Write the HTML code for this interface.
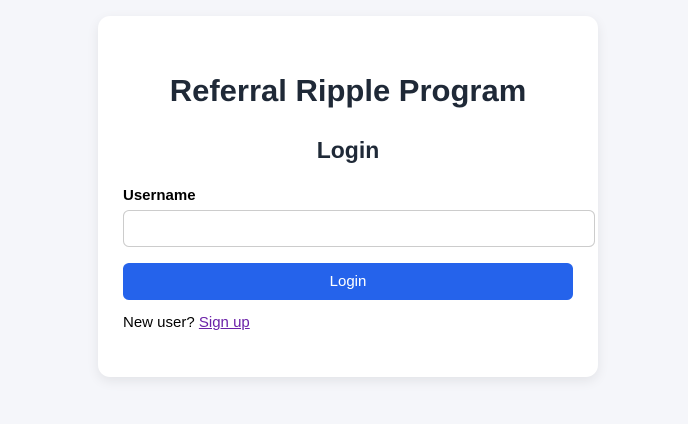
<!DOCTYPE html>
<html><head><style>
body{margin:0;background:#f5f6fa;font-family:"Liberation Sans",sans-serif;width:688px;height:424px;overflow:hidden;}
.card{position:absolute;left:98px;top:16px;width:500px;height:361px;background:#fff;border-radius:12px;box-shadow:0 4px 12px rgba(0,0,0,0.08);}
h1{position:absolute;top:56px;left:0;width:500px;margin:0;text-align:center;font-size:31px;font-weight:bold;color:#1f2937;line-height:38px;}
h2{position:absolute;top:120px;left:0;width:500px;margin:0;text-align:center;font-size:23px;font-weight:bold;color:#1f2937;line-height:28px;}
.lab{position:absolute;left:25px;top:171px;font-size:15px;font-weight:bold;color:#000;line-height:18px;}
.inp{position:absolute;left:25px;top:194px;width:470px;height:35px;border:1px solid #ccc;border-radius:6px;}
.btn{position:absolute;left:25px;top:247px;width:450px;height:37px;background:#2563eb;border-radius:6px;color:#fff;font-size:15px;text-align:center;line-height:37px;}
.nu{position:absolute;left:25px;top:298px;font-size:15px;color:#000;}
.nu a{color:#6b21a8;text-decoration:underline;}
</style></head><body>
<div class="card">
<h1>Referral Ripple Program</h1>
<h2>Login</h2>
<div class="lab">Username</div>
<div class="inp"></div>
<div class="btn">Login</div>
<div class="nu">New user? <a>Sign up</a></div>
</div>
</body></html>
